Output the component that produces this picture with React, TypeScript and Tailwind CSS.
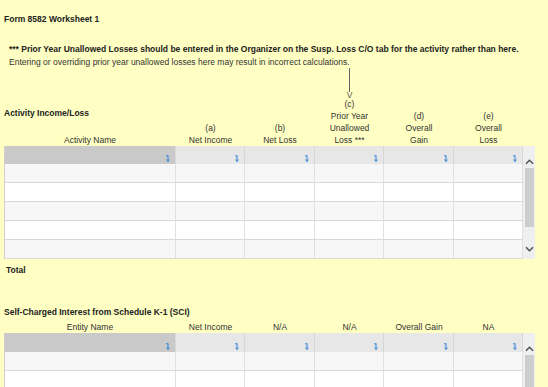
import React from 'react';

const cellW = ['w-[171px]', 'w-[69px]', 'w-[70px]', 'w-[69px]', 'w-[70px]', 'w-[69px]'];

const SortIcon = () => (
  <svg width="5" height="7" viewBox="0 0 5 7" className="text-[#3a87d8]">
    <path d="M1 0.8H3V6.2" stroke="currentColor" strokeWidth="1.1" fill="none" />
    <path d="M1.6 4.6L3 6.6L4.4 4.6" stroke="currentColor" strokeWidth="1" fill="none" />
  </svg>
);

const Chevron = ({ down }: { down?: boolean }) => (
  <svg width="9" height="6" viewBox="0 0 9 6" className="text-[#555]">
    <path d={down ? 'M1 1.2L4.5 4.7L8 1.2' : 'M1 4.8L4.5 1.3L8 4.8'} stroke="currentColor" strokeWidth="1.6" fill="none" />
  </svg>
);

const Scrollbar = ({ thumbH }: { thumbH: number }) => (
  <div className="w-[12px] bg-[#efefef] flex flex-col items-center">
    <div className="h-[22px] flex items-end pb-[3px]">
      <Chevron />
    </div>
    <div className="w-[9px] bg-[#cdcdcd]" style={{ height: thumbH }} />
    <div className="flex-1" />
    <div className="h-[20px] flex items-center">
      <Chevron down />
    </div>
  </div>
);

const Grid = ({ rows, thumbH, tall }: { rows: number; thumbH: number; tall?: boolean }) => (
  <div className="flex ml-[4px] border-l border-[#d0d0d0]">
    <div>
      <div className={`flex ${tall ? 'h-[19px]' : 'h-[18px]'}`}>
        {cellW.map((w, i) => (
          <div
            key={i}
            className={`${w} flex items-end justify-end pr-[5px] pb-[2px] border-r ${
              i === 0 ? 'bg-[#c9c9c9] border-[#dadada]' : 'bg-[#e7e7e7] border-[#d6d6d6]'
            }`}
          >
            <SortIcon />
          </div>
        ))}
      </div>
      {Array.from({ length: rows }).map((_, r) => (
        <div key={r} className={`flex h-[19px] border-b border-[#d9d9d9] ${r % 2 === 0 ? 'bg-[#f7f7f7]' : 'bg-white'}`}>
          {cellW.map((w, i) => (
            <div key={i} className={`${w} border-r border-[#e1e1e1]`} />
          ))}
        </div>
      ))}
    </div>
    <Scrollbar thumbH={thumbH} />
  </div>
);

const Label = ({ children, className = '' }: { children: React.ReactNode; className?: string }) => (
  <div className={`leading-[12px] text-center ${className}`}>{children}</div>
);

export default function App() {
  return (
    <div className="h-[387px] w-[548px] overflow-hidden bg-[#ffffc3] text-[8.5px] text-[#333] font-['Liberation_Sans',Arial,sans-serif]">
      <div className="pt-[13px] pl-[4px] leading-[12px] font-bold text-[#222]">Form 8582 Worksheet 1</div>
      <div className="pt-[18px] pl-[9px] leading-[12px]">
        <div className="font-bold text-[#222]">
          *** Prior Year Unallowed Losses should be entered in the Organizer on the Susp. Loss C/O tab for the activity rather than here.
        </div>
        <div className="mt-[1px]">Entering or overriding prior year unallowed losses here may result in incorrect calculations.</div>
      </div>

      <div className="flex items-end h-[78px] pl-[4px]">
        <div className="w-[172px] flex flex-col">
          <div className="leading-[12px] font-bold text-[#222] mb-[15px]">Activity Income/Loss</div>
          <Label>Activity Name</Label>
        </div>
        <div className="w-[69px]">
          <Label>(a)</Label>
          <Label>Net Income</Label>
        </div>
        <div className="w-[70px]">
          <Label>(b)</Label>
          <Label>Net Loss</Label>
        </div>
        <div className="w-[69px] flex flex-col items-center">
          <div className="w-px h-[24px] bg-[#666]" />
          <div className="h-[6px] leading-[6px] text-[#555]">V</div>
          <Label>(c)</Label>
          <Label>Prior Year</Label>
          <Label>Unallowed</Label>
          <Label>Loss ***</Label>
        </div>
        <div className="w-[70px]">
          <Label>(d)</Label>
          <Label>Overall</Label>
          <Label>Gain</Label>
        </div>
        <div className="w-[69px]">
          <Label>(e)</Label>
          <Label>Overall</Label>
          <Label>Loss</Label>
        </div>
      </div>

      <Grid rows={5} thumbH={59} />

      <div className="pt-[5px] pl-[6px] leading-[12px] font-bold text-[#222]">Total</div>

      <div className="pt-[30px] pl-[4px] leading-[12px] font-bold text-[#222]">
        Self-Charged Interest from Schedule K-1 (SCI)
      </div>
      <div className="flex pl-[4px] pt-[3px]">
        <Label className="w-[172px]">Entity Name</Label>
        <Label className="w-[69px]">Net Income</Label>
        <Label className="w-[70px]">N/A</Label>
        <Label className="w-[69px]">N/A</Label>
        <Label className="w-[70px]">Overall Gain</Label>
        <Label className="w-[69px]">NA</Label>
      </div>
      <Grid rows={5} thumbH={59} tall />
    </div>
  );
}
